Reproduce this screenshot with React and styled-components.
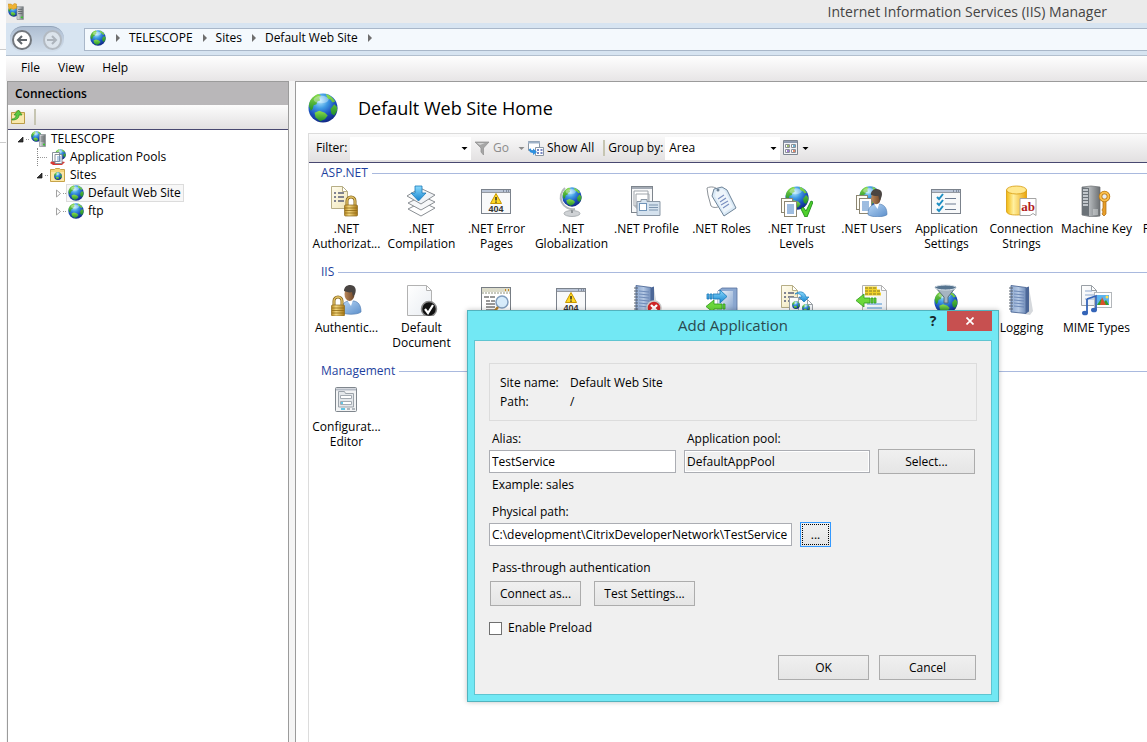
import React, { useState } from "react";
import styled, { createGlobalStyle, css } from "styled-components";

const GlobalStyle = createGlobalStyle`
  * {
    box-sizing: border-box;
  }
  body {
    margin: 0;
    overflow: hidden;
    background: #fff;
    color: #000;
    font-family: "Open Sans", "Noto Sans", sans-serif;
    font-size: 12px;
    line-height: 16px;
  }
  button, input, select {
    font: inherit;
    color: inherit;
    margin: 0;
  }
`;

/* ---------- drawing parts shared by the icons ---------- */

const HiddenDefs = styled.svg`
  position: absolute;
  width: 0;
  height: 0;
`;

function Gradients() {
  return (
    <HiddenDefs aria-hidden="true">
      <defs>
        <radialGradient id="sea" cx="0.4" cy="0.25" r="0.75">
          <stop offset="0" stopColor="#b5ecff" />
          <stop offset="0.35" stopColor="#3f9be4" />
          <stop offset="0.7" stopColor="#1a4fbc" />
          <stop offset="1" stopColor="#122a86" />
        </radialGradient>
        <linearGradient id="land" x1="0" y1="0" x2="0" y2="1">
          <stop offset="0" stopColor="#8fe04a" />
          <stop offset="1" stopColor="#1f8f2a" />
        </linearGradient>
        <linearGradient id="gold" x1="0" y1="0" x2="1" y2="0">
          <stop offset="0" stopColor="#b98a22" />
          <stop offset="0.35" stopColor="#f4d982" />
          <stop offset="1" stopColor="#a87716" />
        </linearGradient>
        <linearGradient id="yellow" x1="0" y1="0" x2="1" y2="0">
          <stop offset="0" stopColor="#f2b90f" />
          <stop offset="0.35" stopColor="#fff0a0" />
          <stop offset="1" stopColor="#eca50a" />
        </linearGradient>
        <linearGradient id="steel" x1="0" y1="0" x2="1" y2="0">
          <stop offset="0" stopColor="#e3e5e6" />
          <stop offset="0.5" stopColor="#a9adb0" />
          <stop offset="1" stopColor="#6c7073" />
        </linearGradient>
        <linearGradient id="paper" x1="0" y1="0" x2="1" y2="1">
          <stop offset="0" stopColor="#ffffff" />
          <stop offset="1" stopColor="#e9edf2" />
        </linearGradient>
        <linearGradient id="cream" x1="0" y1="0" x2="1" y2="1">
          <stop offset="0" stopColor="#fffdf0" />
          <stop offset="1" stopColor="#f1e6b8" />
        </linearGradient>
        <linearGradient id="skin" x1="0" y1="0" x2="1" y2="0">
          <stop offset="0" stopColor="#b9875a" />
          <stop offset="1" stopColor="#6d4629" />
        </linearGradient>
        <linearGradient id="shirt" x1="0" y1="0" x2="1" y2="1">
          <stop offset="0" stopColor="#b7d6f5" />
          <stop offset="1" stopColor="#5c8fcb" />
        </linearGradient>
        <linearGradient id="book" x1="0" y1="0" x2="1" y2="0">
          <stop offset="0" stopColor="#8fa9cf" />
          <stop offset="0.5" stopColor="#b4c8e4" />
          <stop offset="1" stopColor="#6f8bb8" />
        </linearGradient>
        <linearGradient id="bluearrow" x1="0" y1="0" x2="0" y2="1">
          <stop offset="0" stopColor="#8bdcff" />
          <stop offset="1" stopColor="#1583cf" />
        </linearGradient>
        <linearGradient id="box" x1="0" y1="0" x2="1" y2="1">
          <stop offset="0" stopColor="#f5faff" />
          <stop offset="1" stopColor="#7c9cc9" />
        </linearGradient>
      </defs>
    </HiddenDefs>
  );
}

const GlobeArt = ({ x = 0, y = 0, size = 32 }) => (
  <g transform={`translate(${x} ${y}) scale(${size / 32})`}>
    <circle cx="16" cy="16" r="15.5" fill="url(#sea)" />
    <path
      d="M1 14C1 8 5 3 11 1l3 2-2 2 1 3-3 1-1 3-3 1-1 4-2 2z"
      fill="url(#land)"
    />
    <path d="M19 1c4 1 8 4 10 8l-3 1-2-3-3-1zM28 12l3 3v4l-3 5-3-2-1-5z" fill="url(#land)" />
    <path d="M7 21l5-2 6 2 3 3-3 4-5 2-5-4z" fill="url(#land)" />
    <ellipse cx="14" cy="7" rx="8" ry="4" fill="#fff" opacity="0.35" />
  </g>
);

const PageArt = ({ x, y, w, h, fill = "url(#paper)", stroke = "#9aa0a6" }) => (
  <path
    d={`M${x} ${y}h${w - 5}l5 5v${h - 5}h${-w}zM${x + w - 5} ${y}v5h5`}
    fill={fill}
    stroke={stroke}
    strokeWidth="1"
  />
);

const LockArt = ({ x, y }) => (
  <g transform={`translate(${x} ${y})`}>
    <path d="M3 9V5a4 4 0 0 1 8 0v4" fill="none" stroke="#8a681c" strokeWidth="3" />
    <path d="M3 9V5a4 4 0 0 1 8 0v4" fill="none" stroke="#e3c469" strokeWidth="1.4" />
    <rect x="0.5" y="9" width="13" height="11" rx="1" fill="url(#gold)" stroke="#8a681c" strokeWidth="0.7" />
    <path d="M1 12h12M1 14.5h12M1 17h12" stroke="#8f6a14" strokeWidth="0.8" />
  </g>
);

const PersonArt = ({ x, y }) => (
  <g transform={`translate(${x} ${y})`}>
    <path d="M0 27c0-7 3-10 7-11h6c5 1 7 5 7 11-4 3-16 3-20 0z" fill="url(#shirt)" stroke="#5580b5" strokeWidth="0.7" />
    <path d="M6 15h6l-2 6z" fill="#fff" />
    <ellipse cx="8.5" cy="9" rx="5" ry="7" fill="url(#skin)" />
    <path d="M3 6c0-4 3-6 6-6 5 0 7 4 5 9l-2 3-1-5c-2 1-5 0-8-1z" fill="#4a4542" />
  </g>
);

const WindowArt = ({ children }) => (
  <g>
    <rect x="0.5" y="4.5" width="29" height="24" fill="#f8f9fa" stroke="#7b828c" />
    <path d="M1 6h28" stroke="#b9c4d6" strokeWidth="2" />
    <path d="M22 6h1M25 6h1M27 6h1" stroke="#4b5768" strokeWidth="1" />
    <path d="M1 7.5h28" stroke="#7b828c" strokeWidth="0.8" />
    {children}
  </g>
);

const NotebookArt = () => (
  <g>
    <path d="M23 4l4 23-3 4-6-1z" fill="#d5d8dc" />
    <path d="M5 1.5l15 2v26L5 28z" fill="url(#book)" stroke="#4f6a97" strokeWidth="0.9" />
    <path d="M20 3.5l3-1v25l-3 2z" fill="#4c6797" />
    <path d="M8 7l10 1M8 10l10 1M8 13l10 1M8 16l10 1M8 19l10 1M8 22l10 1" stroke="#6783b3" strokeWidth="0.9" />
    <path
      d="M3 4h4M3 7h4M3 10h4M3 13h4M3 16h4M3 19h4M3 22h4M3 25h4"
      stroke="#5b6470"
      strokeWidth="1.2"
    />
  </g>
);

const DocLines = ({ x, y }) => (
  <path
    d={`M${x} ${y}h2M${x} ${y + 4}h2M${x} ${y + 8}h2M${x + 4} ${y}h6M${x + 4} ${y + 4}h6M${x + 4} ${y + 8}h6`}
    stroke="#5a5f78"
    strokeWidth="1.3"
  />
);

const SheetPair = ({ x, y }) => (
  <g transform={`translate(${x} ${y})`}>
    <rect x="0.5" y="0.5" width="11" height="14" fill="#fffef6" stroke="#8c8672" />
    <rect x="3.5" y="3.5" width="12" height="15" fill="#fff" stroke="#8c8672" />
    <path d="M6 7h7M6 9h7M6 11h7M6 13h7M6 15h7" stroke="#3c7ac2" strokeWidth="1" />
  </g>
);

const ServerArt = () => (
  <g>
    <path d="M1 2l9-1 9 1v29l-8 1-10-2z" fill="url(#steel)" stroke="#6a6e71" strokeWidth="0.7" />
    <path d="M1 2l7 1v28l-7-1z" fill="#6b7278" />
    <path d="M2 5h5M2 8h5M2 11h5M2 14h5M2 17h5M2 20h5" stroke="#dfe4e8" strokeWidth="1.3" />
    <path d="M12 25h5M12 27h5M12 29h5" stroke="#e9ecee" strokeWidth="0.8" />
  </g>
);

const NotFoundArt = () => (
  <WindowArt>
    <path d="M15 8.5l5.5 10h-11z" fill="#ffd925" stroke="#c99700" strokeWidth="1" strokeLinejoin="round" />
    <path d="M15 12v3.5M15 16.5v1.2" stroke="#222" strokeWidth="1.4" />
    <text x="15" y="27" textAnchor="middle" fontFamily="Liberation Sans, sans-serif" fontSize="9" fontWeight="700" fill="#333">
      404
    </text>
  </WindowArt>
);

const art = {
  authorization: (
    <>
      <PageArt x={0.5} y={1.5} w={16} h={22} fill="url(#cream)" stroke="#b7ae86" />
      <DocLines x={3} y={8} />
      <LockArt x={13} y={11} />
    </>
  ),
  compilation: (
    <>
      <path d="M2 24l14-7 13 6-14 8z" fill="#fff" stroke="#8a8f94" />
      <path d="M2 18l14-7 13 6-14 8z" fill="#f7f8f9" stroke="#8a8f94" />
      <path d="M1 11l13-8 15 7-14 9z" fill="url(#paper)" stroke="#8a8f94" />
      <path d="M9 1h7v7h4l-7.5 8L5 8h4z" fill="url(#bluearrow)" stroke="#1a78b8" strokeWidth="0.8" />
    </>
  ),
  notFound: <NotFoundArt />,
  globalization: (
    <>
      <ellipse cx="16" cy="28.5" rx="8" ry="3" fill="#cfd2d5" stroke="#94999e" strokeWidth="0.7" />
      <path d="M15 24h2v4h-2z" fill="#8d9296" />
      <path d="M9 3a12 12 0 0 0 10 21" fill="none" stroke="#b3b8bc" strokeWidth="2" />
      <GlobeArt x={6} y={2} size={20} />
    </>
  ),
  profile: (
    <>
      <rect x="0.5" y="1.5" width="21" height="26" fill="#f7f8f9" stroke="#7e858d" />
      <path d="M1 3h20" stroke="#a4abb5" strokeWidth="2" />
      <path d="M3 6h14v15H3zM5 9h13v14H5z" fill="#fff" stroke="#9fa5ab" />
      <path d="M6 16.5h4v-2h6v2h13v14H6z" fill="#d5e2ee" stroke="#8a97a5" />
      <rect x="8.5" y="18.5" width="7" height="7" fill="#fff" stroke="#6f93b8" />
      <path d="M18 20h9M18 22.5h9M18 25h9" stroke="#7b93ad" />
    </>
  ),
  roles: (
    <>
      <path d="M1 3c4-2 9-1 11 2l2 16c-3 2-7 2-9 0L2 10z" fill="#fff" stroke="#8d9399" />
      <path d="M8 4l8-2 5 3 9 18-12 8L6 11z" fill="#d9e9f6" stroke="#6e8397" />
      <path d="M10 6l6-2 3 2 8 16-9 6-9-17z" fill="#eef5fb" />
      <circle cx="12" cy="5" r="1.5" fill="#6e8397" />
      <path d="M12 14l6-4M14 17l6-4M15 20l7-4M17 23l6-4" stroke="#7a8fc0" strokeWidth="1.1" />
    </>
  ),
  trust: (
    <>
      <GlobeArt x={4} y={1} size={24} />
      <SheetPair x={0} y={13} />
      <path d="M20 24l2-2 3 4 5-10 2 1-6 15h-2z" fill="#4fd02d" stroke="#1c8b16" strokeWidth="0.9" />
    </>
  ),
  users: (
    <>
      <GlobeArt x={3} y={1} size={22} />
      <SheetPair x={0} y={10} />
      <g transform="translate(12 4) scale(0.95)">
        <PersonArt x={0} y={0} />
      </g>
    </>
  ),
  settings: (
    <WindowArt>
      <path d="M6 12l2 2 4-5M6 18l2 2 4-5M6 24l2 2 4-5" fill="none" stroke="#1e8ec2" strokeWidth="2" />
      <path d="M14 13.5h11M14 19h11M14 24.5h11" stroke="#6d7c92" strokeWidth="1.2" />
    </WindowArt>
  ),
  connection: (
    <>
      <path d="M0.500 5v21c0 3 4 4 10 4s10-1 10-4V5z" fill="url(#yellow)" stroke="#d59a0c" strokeWidth="0.8" />
      <ellipse cx="10.5" cy="5" rx="10" ry="4" fill="#ffe88e" stroke="#d59a0c" strokeWidth="0.8" />
      <path d="M14 13.5h16v17l-3-2-3 2H14z" fill="#fff" stroke="#a5a5a5" />
      <text x="22" y="26" textAnchor="middle" fontFamily="Liberation Serif, serif" fontSize="13" fontWeight="700" fill="#b11d1d">
        ab
      </text>
    </>
  ),
  machineKey: (
    <>
      <ServerArt />
      <path d="M22 16h3v13l-2 2-2-2 1-2-1-2 1-2z" fill="#e89f2a" stroke="#a9670d" strokeWidth="0.7" />
      <circle cx="23.5" cy="11.5" r="4" fill="#e9edf0" stroke="#b57412" strokeWidth="3.5" />
      <circle cx="23.5" cy="11.5" r="4" fill="none" stroke="#fbc04c" strokeWidth="2" />
    </>
  ),
  pages: (
    <WindowArt>
      <path d="M5 12h9v6H5z" fill="#b7d6f5" stroke="#5a82ad" />
    </WindowArt>
  ),
  authentication: (
    <>
      <PersonArt x={10} y={1} />
      <LockArt x={0} y={12} />
    </>
  ),
  document: (
    <>
      <PageArt x={1.5} y={1.5} w={24} h={30} stroke="#b2b2b2" />
      <circle cx="23" cy="25" r="7.5" fill="#111" stroke="#8b8b8b" strokeWidth="1.5" />
      <path d="M19 25l3 4 5-8" fill="none" stroke="#fff" strokeWidth="2.2" />
    </>
  ),
  browsing: (
    <>
      <rect x="0.5" y="3.5" width="29" height="27" fill="#fff" stroke="#777d84" />
      <path d="M1 6h28" stroke="#dcdccb" strokeWidth="4" />
      <path d="M1 9h28" stroke="#8f937f" strokeDasharray="2 1" />
      <path d="M24 6h1M27 6h1" stroke="#c8861c" strokeWidth="2" />
      <path d="M3 13h5M9 13h5M5 17h4M10 17h4M5 20h9M5 23h9M5 26h9" stroke="#333" strokeWidth="1.2" />
      <circle cx="21" cy="18" r="6" fill="#d7ecfb" stroke="#7f9dbd" strokeWidth="1.5" />
      <path d="M17 23l-4 5" stroke="#b28130" strokeWidth="2.5" />
    </>
  ),
  tracing: (
    <>
      <NotebookArt />
      <circle cx="23" cy="24" r="7" fill="#cf2626" stroke="#c9c9c9" strokeWidth="1.5" />
      <path d="M20 21l6 6M26 21l-6 6" stroke="#fff" strokeWidth="2.4" />
    </>
  ),
  handlers: (
    <>
      <path d="M12 7l4-3h15v24l-4 3H12z" fill="#8ba7d0" stroke="#56709c" strokeWidth="0.8" />
      <path d="M12 7h15v24H12z" fill="url(#box)" />
      <path d="M1 10h2v5H1zM4 10h2v5H4zM7 10h7V6l7 6.5-7 6.5v-4H7z" fill="url(#bluearrow)" stroke="#1575b5" strokeWidth="0.8" />
      <path d="M19 20h-2v5h2zM16 20H8v-4l-8 6.5L8 29v-4h8z" fill="#6bd83a" stroke="#2f9a1c" strokeWidth="0.8" />
    </>
  ),
  redirect: (
    <>
      <PageArt x={0.5} y={1.5} w={16} h={22} fill="url(#cream)" stroke="#b7ae86" />
      <DocLines x={3} y={9} />
      <PageArt x={8.5} y={13.5} w={14} h={18} />
      <PageArt x={17.5} y={15.5} w={14} h={16} />
      <GlobeArt x={11} y={17} size={8} />
      <GlobeArt x={21} y={20} size={8} />
      <path d="M14 10c5-4 10-2 11 3h3l-5 5-5-5h3c-1-3-4-4-7-3z" fill="url(#bluearrow)" stroke="#1a78b8" strokeWidth="0.7" />
    </>
  ),
  headers: (
    <>
      <PageArt x={6.5} y={1.5} w={24} h={30} stroke="#b2b2b2" />
      <path d="M9 4h12M9 7h15M9 10h16" stroke="#f1d22b" strokeWidth="3" />
      <path d="M9 4h12M9 7h15M9 10h16" stroke="#7c6f2a" strokeWidth="0.9" strokeDasharray="3 1" />
      <path d="M11 20h15M11 24h15" stroke="#4a90d0" strokeWidth="1.2" />
      <path d="M20 14h-2v5h2zM17 14h-2v5h2zM14 14H8v-4l-8 6.5L8 23v-4h6z" fill="#6bd83a" stroke="#2f9a1c" strokeWidth="0.8" />
    </>
  ),
  filters: (
    <>
      <GlobeArt x={3} y={6} size={24} />
      <path d="M4 3h21l-8 10v6h-4v-6z" fill="#a5b4c1" stroke="#4e6273" strokeWidth="0.9" />
      <ellipse cx="14.5" cy="3.5" rx="10.5" ry="2.5" fill="#56748f" stroke="#d7e0e8" />
    </>
  ),
  logging: <NotebookArt />,
  mime: (
    <>
      <PageArt x={0.5} y={1.5} w={15} h={20} />
      <path d="M4 7h7M4 11h9M4 15h9" stroke="#8fa9cf" />
      <rect x="13.5" y="8.5" width="17" height="15" fill="#fff" stroke="#b3b7bb" />
      <path d="M16 11h12v10H16z" fill="#5bb4ee" />
      <path d="M16 21l4-6 3 3 2-2 3 5z" fill="#34a02c" />
      <path d="M21 13l4 8h-6z" fill="#d9532c" />
      <circle cx="26" cy="13" r="1.5" fill="#ffe04d" />
      <path d="M6 15l9-3v14M6 15v14" fill="none" stroke="#3464b8" strokeWidth="1.8" />
      <ellipse cx="4" cy="29" rx="3" ry="2.3" fill="#3464b8" />
      <ellipse cx="13" cy="26" rx="3" ry="2.3" fill="#3464b8" />
    </>
  ),
  editor: (
    <>
      <rect x="4.5" y="4.5" width="21" height="24" rx="1" fill="#f3f4f5" stroke="#7f868d" />
      <path d="M5 6.5h20" stroke="#b4bbc5" strokeWidth="2" />
      <path d="M7.5 24V8.5h6l1 2h8V24z" fill="#e5e8eb" stroke="#9ca3aa" />
      <path d="M9.5 12.5h11v3h-11zM9.5 18.5h11v3h-11z" fill="#fff" stroke="#a4abb2" />
      <path d="M10 20h2M10 26h4" stroke="#35b5e0" strokeWidth="1.3" />
      <path d="M16 26h3M21 26h3" stroke="#9ca3aa" strokeWidth="1.3" />
    </>
  ),
};

const Glyph = styled.svg`
  display: block;
  flex: none;
  width: ${({ $size }) => $size}px;
  height: ${({ $size }) => $size}px;
`;

const Icon = ({ size = 16, box = 16, children }) => (
  <Glyph $size={size} viewBox={`0 0 ${box} ${box}`} aria-hidden="true">
    {children}
  </Glyph>
);

const GlobeIcon = ({ size = 16 }) => (
  <Icon size={size} box={32}>
    <GlobeArt />
  </Icon>
);

const ServerIcon = ({ size = 16, badge }) => (
  <Icon size={size}>
    <GlobeArt x={0} y={badge ? 2 : 0} size={11} />
    <path d="M8.5 3.5h6v12h-6z" fill="url(#steel)" stroke="#8b9093" strokeWidth="0.7" />
    <path d="M9.5 6h4M9.5 8h4M9.5 10h4" stroke="#5c6265" strokeWidth="0.8" />
    <path d="M12 13.5h2" stroke="#36c92e" strokeWidth="1.5" />
    {badge && <path d="M0 1h3l1 1 2-1.5 2 .5v4L5 6 3 5 1 6z" fill="#efb232" stroke="#c98b1b" strokeWidth="0.5" />}
  </Icon>
);

const PoolsIcon = () => (
  <Icon>
    <GlobeArt x={5} y={0} size={11} />
    <path d="M3 11l-3 3 3 2h9l3-3z" fill="#d83a34" />
    <path d="M2.5 3.5h7v9h-7zM5 5.5h7v9H5z" fill="#fff" stroke="#7d8792" strokeWidth="0.9" />
    <path d="M7 8h4M7 10h4M7 12h4" stroke="#5d90c7" strokeWidth="0.9" />
  </Icon>
);

const SitesIcon = () => (
  <Icon>
    <path d="M0.5 2.5v12h14v-12h-4l-1-1h-4l-1 1z" fill="#f5d67c" stroke="#c19b3b" strokeWidth="0.9" />
    <path d="M1 5h13v9H1z" fill="#fbe7a6" />
    <GlobeArt x={4} y={5} size={8} />
  </Icon>
);

const FolderUpIcon = () => (
  <Icon>
    <path d="M1.5 3.5v11h13v-11h-4l-1-1.5h-3l-1 1.5z" fill="#f3d98a" stroke="#b3943a" strokeWidth="0.9" />
    <path d="M2 6h12v8H2z" fill="#f9e8ad" />
    <path d="M2 10c3 0 4-2 4-4H4l4.5-5L12 6h-3c0 3-2 5-7 5z" fill="#5bc840" stroke="#2f8f22" strokeWidth="0.7" />
  </Icon>
);

const Caret = ({ color = "#000" }) => (
  <Icon size={7} box={7}>
    <path d="M0.5 2h6L3.5 5z" fill={color} />
  </Icon>
);

/* ---------- window frame ---------- */

const Page = styled.div`
  position: relative;
  display: flex;
  flex-direction: column;
  min-height: 100vh;
  padding-left: 6px;
  overflow: hidden;
  background: linear-gradient(#fbfbfb 49px, #ccc 49px, #ccc 50px, #fff 50px, #fff 142px, #ccc 142px, #ccc 143px, #fff 143px);
`;
const TitleBar = styled.header`
  display: flex;
  align-items: center;
  justify-content: space-between;
  height: 23px;
  padding: 0 40px 0 2px;
  background: #ebebeb;
  color: #444;
`;
const WindowTitle = styled.h1`
  margin: 0;
  font-size: 14px;
  font-weight: 400;
  line-height: 22px;
`;
const AddressBar = styled.nav`
  display: flex;
  align-items: center;
  gap: 20px;
  height: 33px;
  padding-left: 4px;
  background: #d7e4f1;
  border-bottom: 1px solid #b3c0cf;
`;
const HistoryButtons = styled.div`
  display: flex;
  align-items: center;
  gap: 11px;
  width: 54px;
  height: 26px;
  padding: 0 2px;
  border-radius: 13px;
  border-top: 1px solid #93a4b9;
  background: linear-gradient(#aebed2, #d3dfec);
`;
const RoundButton = styled.button`
  display: flex;
  align-items: center;
  justify-content: center;
  width: 20px;
  height: 20px;
  padding: 0;
  border: 2px solid ${({ disabled }) => (disabled ? "#b3bac2" : "#73787e")};
  border-radius: 50%;
  background: ${({ disabled }) => (disabled ? "#dce4ec" : "#fff")};
  color: ${({ disabled }) => (disabled ? "#acb3bb" : "#60666c")};
`;
const Breadcrumbs = styled.div`
  display: flex;
  flex: 1;
  align-items: center;
  height: 23px;
  padding: 0 0 2px 5px;
  border: 1px solid #a9b7c9;
  border-right: 0;
  background: #f4f9fd;
`;
const Crumb = styled.a`
  color: #000;
  text-decoration: none;
`;
const CrumbArrow = styled.span`
  width: 0;
  height: 0;
  margin: 0 9px 0 10px;
  border: 4px solid transparent;
  border-left-color: #6e6e6e;
  border-right-width: 0;
`;
const MenuBar = styled.div`
  display: flex;
  align-items: center;
  gap: 18px;
  height: 25px;
  padding: 0 0 2px 15px;
  background: linear-gradient(#fefefe, #e7e5e6);
`;
const MenuButton = styled.button`
  padding: 0;
  border: 0;
  background: none;
`;
const Body = styled.div`
  display: flex;
  flex: 1;
  gap: 6px;
  padding-left: 1px;
  background: #f5f5f5;
`;

/* ---------- connections panel ---------- */

const Connections = styled.aside`
  flex: none;
  width: 282px;
  border: 1px solid #9b9b9b;
  border-bottom: 0;
  background: #fff;
`;
const PanelTitle = styled.h2`
  margin: 0;
  padding: 4px 7px;
  background: #b9b7b9;
  font-size: 12px;
  font-weight: 600;
  line-height: 15px;
`;
const PanelTools = styled.div`
  display: flex;
  align-items: center;
  gap: 8px;
  height: 25px;
  padding-left: 2px;
  border-bottom: 1px solid #484870;
  background: linear-gradient(#fcfcfc, #e2e0e1);
`;
const PlainButton = styled.button`
  display: flex;
  align-items: center;
  gap: 3px;
  padding: 0;
  border: 0;
  background: none;
  color: ${({ disabled }) => (disabled ? "#8c8c8c" : "#000")};
`;
const Divider = styled.span`
  width: 2px;
  height: 16px;
  background: #c6c5b2;
`;
const Tree = styled.ul`
  margin: 0;
  padding: 0;
  list-style: none;
`;
const TreeRow = styled.li`
  display: flex;
  align-items: center;
  height: 18px;
  padding-left: ${({ $indent }) => $indent}px;
`;
const Twisty = styled.span`
  flex: none;
  width: 10px;
  height: 10px;
`;
const Dots = styled.span`
  flex: none;
  width: ${({ $wide }) => ($wide ? 11 : 3)}px;
  height: 18px;
  background: linear-gradient(90deg, #999 50%, transparent 50%) 0 9px / 2px 1px repeat-x;
  ${({ $wide }) =>
    $wide &&
    css`
      border-left: 1px dotted #888;
    `}
`;
const TreeLabel = styled.span`
  display: flex;
  align-items: center;
  gap: 4px;
  height: 18px;
  padding: 0 2px 0 1px;
  border: 1px solid ${({ $selected }) => ($selected ? "#dcdcdc" : "transparent")};
  background: ${({ $selected }) => ($selected ? "#f7f7f7" : "none")};
`;

const treeRows = [
  { label: "TELESCOPE", indent: 8, state: "open", icon: <ServerIcon /> },
  { label: "Application Pools", indent: 29, icon: <PoolsIcon /> },
  { label: "Sites", indent: 27, state: "open", icon: <SitesIcon /> },
  { label: "Default Web Site", indent: 45, state: "closed", selected: true, icon: <GlobeIcon /> },
  { label: "ftp", indent: 45, state: "closed", icon: <GlobeIcon /> },
];

function TreeItem({ label, indent, state, selected, icon }) {
  return (
    <TreeRow $indent={indent}>
      {state && (
        <Twisty>
          <Icon size={10} box={10}>
            {state === "open" ? (
              <path d="M7 3v5H2z" fill="#333" stroke="#111" strokeWidth="0.7" />
            ) : (
              <path d="M3.5 2v7l4-3.5z" fill="#fff" stroke="#a2a2a2" />
            )}
          </Icon>
        </Twisty>
      )}
      <Dots $wide={!state} />
      <TreeLabel $selected={selected}>
        {icon}
        {label}
      </TreeLabel>
    </TreeRow>
  );
}

/* ---------- home page ---------- */

const Main = styled.main`
  display: flex;
  flex: 1;
  flex-direction: column;
  min-width: 0;
  padding-left: 12px;
  border: 1px solid #9b9b9b;
  border-right: 0;
  border-bottom: 0;
  background: #fff;
  overflow: hidden;
`;
const MainHeader = styled.div`
  display: flex;
  flex: none;
  align-items: center;
  gap: 20px;
  height: 51px;
`;
const MainTitle = styled.h2`
  margin: 0;
  font-size: 18px;
  font-weight: 400;
  line-height: 24px;
`;
const FeaturePane = styled.div`
  flex: 1;
  border-left: 1px solid #dcdcdc;
`;
const Toolbar = styled.div`
  display: flex;
  align-items: center;
  height: 30px;
  padding-left: 7px;
  border-top: 1px solid #dcdcdc;
  border-bottom: 1px solid #484870;
  background: linear-gradient(#fafafa, #e2e0e1);
  white-space: nowrap;
`;
const ToolbarLabel = styled.label`
  width: ${({ $width }) => $width}px;
`;
const Combo = styled.div`
  display: flex;
  align-items: center;
  width: 121px;
  height: 23px;
  padding-right: 3px;
  background: #fff;
`;
const ComboInput = styled.input`
  flex: 1;
  min-width: 0;
  border: 0;
  outline: 0;
  background: none;
`;
const SelectBox = styled.div`
  display: grid;
  align-items: center;
  width: 115px;
  height: 23px;
  padding-right: 3px;
  background: #fff;
  & > * {
    grid-area: 1 / 1;
  }
  & > svg {
    justify-self: end;
    pointer-events: none;
  }
`;
const GroupSelect = styled.select`
  width: 100%;
  padding: 0 4px;
  border: 0;
  outline: 0;
  appearance: none;
  background: none;
`;
const ToolGroup = styled.div`
  display: flex;
  align-items: center;
  gap: ${({ $gap }) => $gap}px;
  margin-left: 3px;
`;
const Group = styled.section`
  padding: 2px 0 11px;
`;
const GroupTitle = styled.h3`
  display: flex;
  align-items: center;
  gap: 4px;
  margin: 0 0 4px;
  padding-left: 12px;
  color: #1e3f9e;
  font-size: 12px;
  font-weight: 400;
  line-height: 16px;
  &::after {
    content: "";
    flex: 1;
    height: 1px;
    background: #a9b9de;
  }
`;
const Items = styled.div`
  display: flex;
`;
const Item = styled.a`
  display: flex;
  flex: none;
  flex-direction: column;
  align-items: center;
  gap: 4px;
  width: 75px;
  height: 66px;
  color: #000;
  text-align: center;
  text-decoration: none;
`;
const ItemLabel = styled.span`
  line-height: 15px;
  white-space: pre;
`;

const groups = [
  {
    title: "ASP.NET",
    items: [
      { icon: "authorization", label: ".NET\nAuthorizat..." },
      { icon: "compilation", label: ".NET\nCompilation" },
      { icon: "notFound", label: ".NET Error\nPages" },
      { icon: "globalization", label: ".NET\nGlobalization" },
      { icon: "profile", label: ".NET Profile" },
      { icon: "roles", label: ".NET Roles" },
      { icon: "trust", label: ".NET Trust\nLevels" },
      { icon: "users", label: ".NET Users" },
      { icon: "settings", label: "Application\nSettings" },
      { icon: "connection", label: "Connection\nStrings" },
      { icon: "machineKey", label: "Machine Key" },
      { icon: "pages", label: "Pages and\nControls" },
    ],
  },
  {
    title: "IIS",
    items: [
      { icon: "authentication", label: "Authentic..." },
      { icon: "document", label: "Default\nDocument" },
      { icon: "browsing" },
      { icon: "notFound" },
      { icon: "tracing" },
      { icon: "handlers" },
      { icon: "redirect" },
      { icon: "headers" },
      { icon: "filters" },
      { icon: "logging", label: "Logging" },
      { icon: "mime", label: "MIME Types" },
    ],
  },
  {
    title: "Management",
    items: [{ icon: "editor", label: "Configurat...\nEditor" }],
  },
];

/* ---------- dialog ---------- */

const DialogFrame = styled.div`
  position: absolute;
  top: 310px;
  left: 467px;
  width: 532px;
  padding: 0 6px 6px;
  border: 1px solid #52b3be;
  background: #72e8f4;
  box-shadow: 0 0 5px rgba(0, 0, 0, 0.25);
`;
const DialogTitleBar = styled.div`
  display: grid;
  grid-template-columns: 1fr auto 1fr;
  height: 29px;
`;
const DialogTitle = styled.h2`
  grid-column: 2;
  margin: 0;
  color: #2b4a4e;
  font-size: 15px;
  font-weight: 400;
  line-height: 29px;
`;
const CaptionButtons = styled.div`
  display: flex;
  justify-content: flex-end;
  height: 20px;
`;
const HelpButton = styled.button`
  width: 28px;
  padding: 0;
  border: 0;
  background: none;
  color: #17292b;
  font-size: 14px;
  font-weight: 700;
`;
const CloseButton = styled.button`
  display: flex;
  align-items: center;
  justify-content: center;
  width: 45px;
  padding: 0;
  border: 0;
  background: #c75050;
`;
const DialogBody = styled.form`
  padding: 22px 14px 14px;
  border: 1px solid #5fc5d1;
  background: #f0f0f0;
`;
const SiteInfo = styled.dl`
  display: grid;
  grid-template-columns: 70px 1fr;
  margin: 0 0 8px;
  padding: 9px 10px;
  border: 1px solid #dcdcdc;
  line-height: 19px;
  dd {
    margin: 0;
  }
`;
const FieldGrid = styled.div`
  display: grid;
  grid-template-columns: 187px 186px 97px;
  column-gap: 8px;
  align-items: center;
  margin-bottom: 1px;
`;
const FieldLabel = styled.label`
  display: block;
  padding: 0 0 1px 3px;
  line-height: 19px;
`;
const TextBox = styled.input`
  width: 100%;
  height: 23px;
  padding: 0 2px 1px;
  border: 1px solid #abadb3;
  border-radius: 0;
  outline: 0;
  background: ${({ readOnly }) => (readOnly ? "#f0f0f0" : "#fff")};
  ${({ readOnly }) => readOnly && "box-shadow: inset 0 0 0 1px #fff;"}
`;
const Hint = styled.p`
  margin: 0 0 8px;
  padding-left: 3px;
  line-height: 19px;
`;
const PathRow = styled.div`
  display: grid;
  grid-template-columns: 303px 31px;
  gap: 8px;
  align-items: center;
  margin-bottom: 11px;
`;
const PushButton = styled.button`
  width: ${({ $width }) => $width}px;
  height: 25px;
  padding: 0;
  border: 1px solid ${({ $focused }) => ($focused ? "#3399ff" : "#acacac")};
  background: linear-gradient(#f0f0f0, #e5e5e5);
  ${({ $focused }) =>
    $focused &&
    css`
      outline: 1px dotted #000;
      outline-offset: -3px;
    `}
`;
const AuthRow = styled.div`
  display: flex;
  gap: 13px;
  margin: 3px 0 13px;
  padding-left: 1px;
`;
const CheckLabel = styled.label`
  display: flex;
  align-items: center;
  gap: 6px;
  line-height: 18px;
`;
const CheckBox = styled.input`
  appearance: none;
  width: 13px;
  height: 13px;
  border: 1px solid #707070;
  background: #fff;
  &:checked {
    background: #555;
    box-shadow: inset 0 0 0 2px #fff;
  }
`;
const DialogActions = styled.div`
  display: flex;
  justify-content: flex-end;
  gap: 10px;
  margin-top: 18px;
  padding-right: 1px;
`;

function AddApplicationDialog() {
  const [alias, setAlias] = useState("TestService");
  const [path, setPath] = useState("C:\\development\\CitrixDeveloperNetwork\\TestService");
  const [preload, setPreload] = useState(false);

  return (
    <DialogFrame role="dialog" aria-labelledby="dialog-title">
      <DialogTitleBar>
        <DialogTitle id="dialog-title">Add Application</DialogTitle>
        <CaptionButtons>
          <HelpButton type="button">?</HelpButton>
          <CloseButton type="button" aria-label="Close">
            <Icon size={8} box={8}>
              <path d="M0.5 0.5l7 7M7.5 0.5l-7 7" stroke="#fff" strokeWidth="1.7" />
            </Icon>
          </CloseButton>
        </CaptionButtons>
      </DialogTitleBar>
      <DialogBody onSubmit={(e) => e.preventDefault()}>
        <SiteInfo>
          <dt>Site name:</dt>
          <dd>Default Web Site</dd>
          <dt>Path:</dt>
          <dd>/</dd>
        </SiteInfo>
        <FieldGrid>
          <FieldLabel htmlFor="alias">Alias:</FieldLabel>
          <FieldLabel htmlFor="pool">Application pool:</FieldLabel>
          <span />
          <TextBox id="alias" value={alias} onChange={(e) => setAlias(e.target.value)} />
          <TextBox id="pool" value="DefaultAppPool" readOnly />
          <PushButton type="button" $width={97}>
            Select...
          </PushButton>
        </FieldGrid>
        <Hint>Example: sales</Hint>
        <FieldLabel htmlFor="path">Physical path:</FieldLabel>
        <PathRow>
          <TextBox id="path" value={path} onChange={(e) => setPath(e.target.value)} />
          <PushButton type="button" $width={31} $focused>
            ...
          </PushButton>
        </PathRow>
        <FieldLabel as="div">Pass-through authentication</FieldLabel>
        <AuthRow>
          <PushButton type="button" $width={91}>
            Connect as...
          </PushButton>
          <PushButton type="button" $width={101}>
            Test Settings...
          </PushButton>
        </AuthRow>
        <CheckLabel>
          <CheckBox type="checkbox" checked={preload} onChange={(e) => setPreload(e.target.checked)} />
          Enable Preload
        </CheckLabel>
        <DialogActions>
          <PushButton type="submit" $width={91}>
            OK
          </PushButton>
          <PushButton type="button" $width={97}>
            Cancel
          </PushButton>
        </DialogActions>
      </DialogBody>
    </DialogFrame>
  );
}

export default function App() {
  return (
    <>
      <GlobalStyle />
      <Gradients />
      <Page>
        <TitleBar>
          <ServerIcon size={17} badge />
          <WindowTitle>Internet Information Services (IIS) Manager</WindowTitle>
        </TitleBar>
        <AddressBar>
          <HistoryButtons>
            <RoundButton type="button" aria-label="Back">
              <Icon size={12} box={12}>
                <path d="M11 6H2M6 2L2 6l4 4" fill="none" stroke="currentColor" strokeWidth="2" />
              </Icon>
            </RoundButton>
            <RoundButton type="button" aria-label="Forward" disabled>
              <Icon size={12} box={12}>
                <path d="M1 6h9M6 2l4 4-4 4" fill="none" stroke="currentColor" strokeWidth="2" />
              </Icon>
            </RoundButton>
          </HistoryButtons>
          <Breadcrumbs>
            <GlobeIcon />
            {["TELESCOPE", "Sites", "Default Web Site"].map((name) => (
              <React.Fragment key={name}>
                <CrumbArrow />
                <Crumb href="#">{name}</Crumb>
              </React.Fragment>
            ))}
            <CrumbArrow />
          </Breadcrumbs>
        </AddressBar>
        <MenuBar>
          <MenuButton type="button">File</MenuButton>
          <MenuButton type="button">View</MenuButton>
          <MenuButton type="button">Help</MenuButton>
        </MenuBar>
        <Body>
          <Connections>
            <PanelTitle>Connections</PanelTitle>
            <PanelTools>
              <PlainButton type="button" aria-label="Up">
                <FolderUpIcon />
              </PlainButton>
              <Divider />
            </PanelTools>
            <Tree>
              {treeRows.map((row) => (
                <TreeItem key={row.label} {...row} />
              ))}
            </Tree>
          </Connections>
          <Main>
            <MainHeader>
              <GlobeIcon size={30} />
              <MainTitle>Default Web Site Home</MainTitle>
            </MainHeader>
            <FeaturePane>
              <Toolbar>
                <ToolbarLabel htmlFor="filter" $width={34}>
                  Filter:
                </ToolbarLabel>
                <Combo>
                  <ComboInput id="filter" />
                  <Caret />
                </Combo>
                <ToolGroup $gap={9}>
                  <PlainButton type="button" disabled>
                    <Icon>
                      <path d="M1 2h14L9.5 8v7L7 12V8z" fill="#a6a6a6" stroke="#8e8e8e" strokeWidth="0.7" />
                      <path d="M3 3h8L6 5z" fill="#d4d4d4" />
                    </Icon>
                    Go
                  </PlainButton>
                  <Caret color="#8c8c8c" />
                </ToolGroup>
                <ToolGroup $gap={9}>
                  <PlainButton type="button">
                    <Icon>
                      <path d="M0.5 1.5h11v9H0.5z" fill="#fff" stroke="#8a97a5" />
                      <path d="M0 2.5h12" stroke="#9fb2c8" strokeWidth="2" />
                      <path d="M7.5 7.5h8v8h-8z" fill="#fff" stroke="#8a97a5" />
                      <path d="M9 10h2M12.5 10h2M9 13h2M12.5 13h2" stroke="#4a5fae" strokeWidth="1.6" />
                      <path d="M1 9c0 3 2 4 4 4v2l4-3-4-3.5v2c-1 0-2 0-2-2z" fill="#2c8fe0" />
                    </Icon>
                    Show All
                  </PlainButton>
                  <Divider />
                </ToolGroup>
                <ToolGroup $gap={0}>
                  <ToolbarLabel htmlFor="group-by" $width={57}>
                    Group by:
                  </ToolbarLabel>
                  <SelectBox>
                    <GroupSelect id="group-by" defaultValue="Area">
                      <option>Area</option>
                      <option>Category</option>
                    </GroupSelect>
                    <Caret />
                  </SelectBox>
                </ToolGroup>
                <ToolGroup $gap={2}>
                  <PlainButton type="button" aria-label="View">
                    <Icon>
                      <path d="M0.5 0.5h14v14h-14z" fill="#f4f5f7" stroke="#7d8590" />
                      <path d="M1 2h13" stroke="#8f9bb0" strokeWidth="2" />
                      <path d="M2.5 4.5h4v3h-4zM2.5 9.5h4v3h-4zM8.5 4.5h4v3h-4zM8.5 9.5h4v3h-4z" fill="#fff" stroke="#8a8f98" />
                      <path d="M4 6h2" stroke="#7aa43a" strokeWidth="1.5" />
                      <path d="M10 6h2" stroke="#3a9ac4" strokeWidth="1.5" />
                      <path d="M4 11h2" stroke="#7c50c4" strokeWidth="1.5" />
                      <path d="M10 11h2" stroke="#d8633a" strokeWidth="1.5" />
                    </Icon>
                    <Caret />
                  </PlainButton>
                </ToolGroup>
              </Toolbar>
              {groups.map((group) => (
                <Group key={group.title}>
                  <GroupTitle>{group.title}</GroupTitle>
                  <Items>
                    {group.items.map(({ icon, label }) => (
                      <Item key={icon} href="#" aria-label={label || icon}>
                        <Icon size={32} box={32}>
                          {art[icon]}
                        </Icon>
                        {label && <ItemLabel>{label}</ItemLabel>}
                      </Item>
                    ))}
                  </Items>
                </Group>
              ))}
            </FeaturePane>
          </Main>
        </Body>
        <AddApplicationDialog />
      </Page>
    </>
  );
}
